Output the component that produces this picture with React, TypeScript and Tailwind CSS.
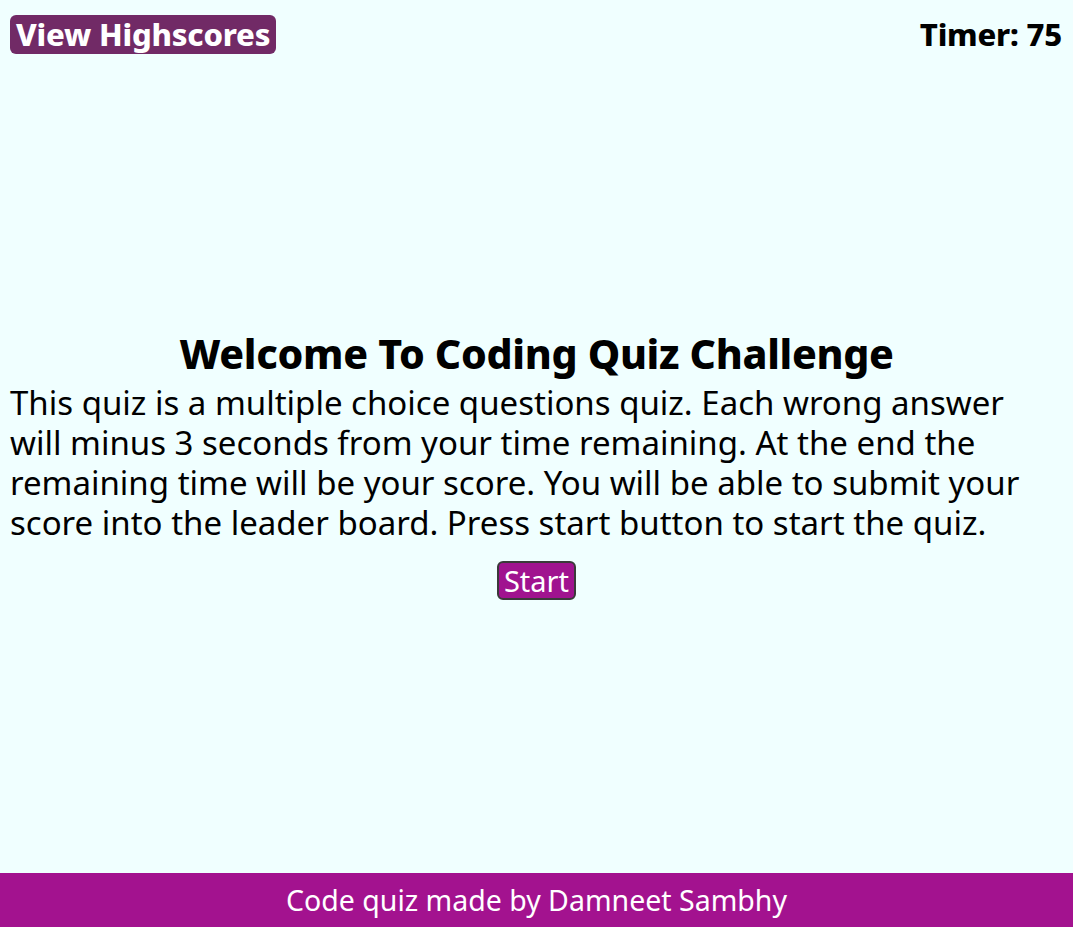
export default function App() {
  return (
    <div className="min-h-screen flex flex-col bg-[#f0ffff] text-black" style={{ fontFamily: "'Noto Sans', sans-serif" }}>
      <header className="flex items-start justify-between px-[10px] pt-[15px]">
        <button className="h-[39px] px-[6px] rounded-[6px] bg-[#712a66] text-white text-[31px] font-extrabold leading-[39px] tracking-[-0.2px]">
          View Highscores
        </button>
        <div className="text-[31px] font-extrabold leading-[39px] pr-[1px] tracking-[-0.2px]">Timer: 75</div>
      </header>
      <main className="flex-1 flex flex-col items-center justify-center px-[10px] pt-[3px]">
        <h1 className="text-[41px] font-extrabold leading-[46px] text-center tracking-[-0.3px] mb-[7px]">Welcome To Coding Quiz Challenge</h1>
        <p className="self-stretch text-[33px] leading-[40px] text-left whitespace-nowrap">
          This quiz is a multiple choice questions quiz. Each wrong answer<br />
          will minus 3 seconds from your time remaining. At the end the<br />
          remaining time will be your score. You will be able to submit your<br />
          score into the leader board. Press start button to start the quiz.
        </p>
        <button className="mt-[18px] h-[39px] px-[5px] rounded-[6px] bg-[#a0138f] border-2 border-[#3a3a3a] text-white text-[29px] leading-[34px]">
          Start
        </button>
      </main>
      <footer className="h-[54px] bg-[#a3128f] text-white flex items-center justify-center text-[28.5px]">
        Code quiz made by Damneet Sambhy
      </footer>
    </div>
  );
}
